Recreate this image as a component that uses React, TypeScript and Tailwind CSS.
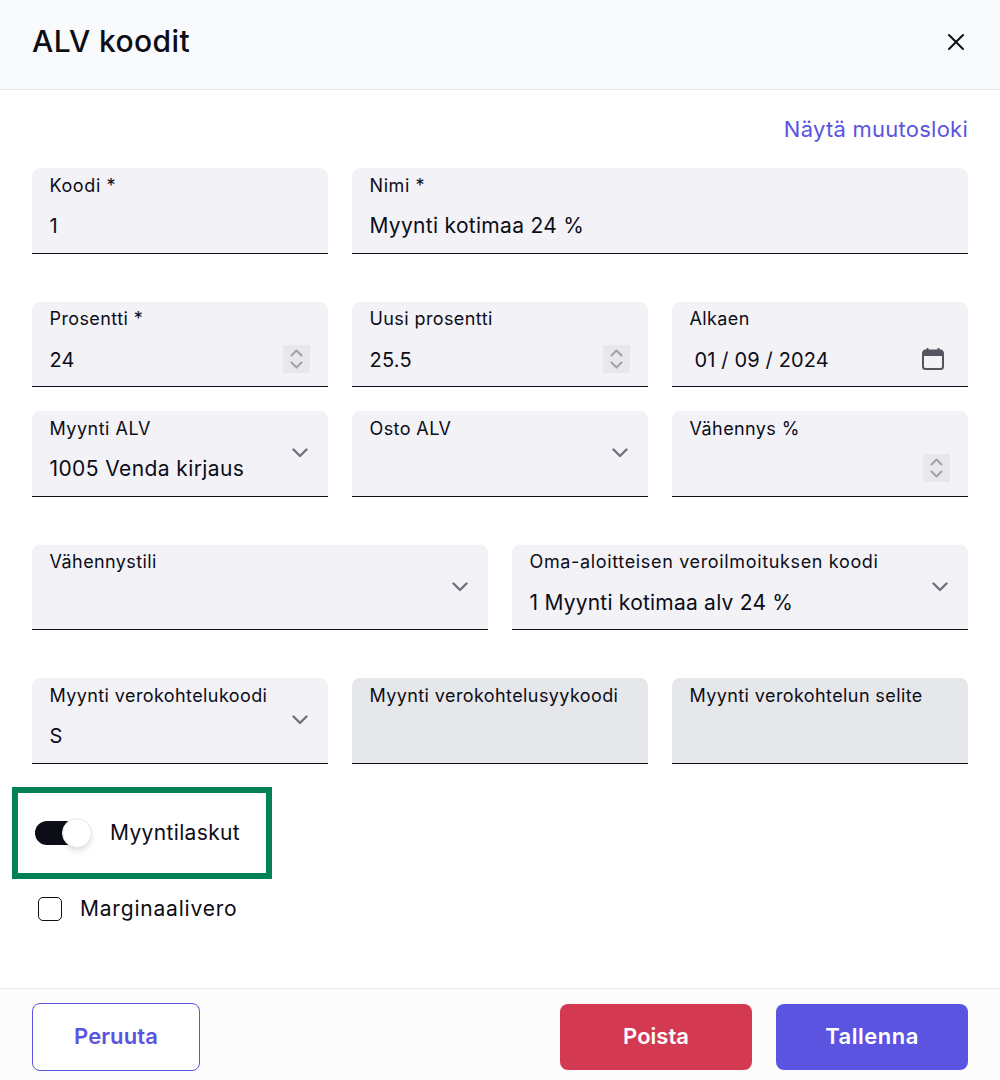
import React from "react";

const font = { fontFamily: "Inter, 'Noto Sans', sans-serif" };

function Select() {
  return (
    <svg width="16" height="10" viewBox="0 0 16 10" fill="none" className="absolute right-[20px] top-[37px]">
      <path d="M1.5 1.5 8 8l6.5-6.5" stroke="#71717f" strokeWidth="2.4" strokeLinecap="round" strokeLinejoin="round" />
    </svg>
  );
}

function Spin() {
  return (
    <div className="absolute right-[18px] top-[43px] w-[27px] h-[28px] bg-[#e7e7ec] flex flex-col items-center justify-center gap-[4px]">
      <svg width="13" height="8" viewBox="0 0 13 8" fill="none">
        <path d="M1.5 6.5 6.5 1.5l5 5" stroke="#a0a0ac" strokeWidth="2" strokeLinecap="round" strokeLinejoin="round" />
      </svg>
      <svg width="13" height="8" viewBox="0 0 13 8" fill="none">
        <path d="M1.5 1.5l5 5 5-5" stroke="#a0a0ac" strokeWidth="2" strokeLinecap="round" strokeLinejoin="round" />
      </svg>
    </div>
  );
}

function Calendar() {
  return (
    <svg width="22" height="22" viewBox="0 0 22 22" fill="none" className="absolute right-[24px] top-[46px]">
      <path d="M5.5 0.5v3M16.5 0.5v3" stroke="#55555f" strokeWidth="2" strokeLinecap="round" />
      <rect x="1" y="3" width="20" height="18" rx="2.5" stroke="#55555f" strokeWidth="2" />
      <path d="M1 3.5a2 2 0 0 1 2-2h16a2 2 0 0 1 2 2V8H1z" fill="#55555f" />
    </svg>
  );
}

type FieldProps = {
  label: string;
  value?: string;
  className: string;
  disabled?: boolean;
  adorn?: React.ReactNode;
  valueClass?: string;
  labelClass?: string;
};

function Field({ label, value, className, disabled, adorn, valueClass, labelClass }: FieldProps) {
  return (
    <div
      className={`relative h-[85.5px] rounded-t-[8px] border-b border-[#0d0d17] pl-[17.5px] pr-[18px] ${
        disabled ? "bg-[#e6e7eb]" : "bg-[#f2f2f7]"
      } ${className}`}
    >
      <div className={`pt-[5.5px] h-[36px] text-[18px] leading-[24px] text-[#0d0d17] whitespace-nowrap ${labelClass ?? "tracking-[0.4px]"}`}>{label}</div>
      {value ? (
        <div className={`leading-[30px] pt-[7px] text-[#0d0d17] whitespace-nowrap ${valueClass ?? "text-[21px] tracking-[0.3px]"}`}>{value}</div>
      ) : null}
      {adorn}
    </div>
  );
}

export default function App() {
  return (
    <div className="h-[1080px] w-[1000px] flex flex-col bg-white overflow-hidden" style={font}>
      <header className="h-[90px] shrink-0 flex items-center justify-between pl-[32px] pr-[35px] pb-[6px] bg-[#f9fafb] border-b border-[#e5e7eb]">
        <h1 className="text-[30px] leading-[36px] font-medium text-[#0d0d17] tracking-[0.4px] -mt-[2px]">ALV koodit</h1>
        <svg width="18" height="18" viewBox="0 0 18 18" fill="none">
          <path d="M2 2l14 14M16 2 2 16" stroke="#0d0d17" strokeWidth="2" strokeLinecap="round" />
        </svg>
      </header>

      <main className="flex-1 px-[32px] flex flex-col">
        <div className="h-[78px] flex justify-end pt-[24px]">
          <a className="text-[22px] leading-[30px] text-[#5b54e0] tracking-[0.25px]">Näytä muutosloki</a>
        </div>

        <div className="flex gap-[24px]">
          <Field className="w-[296px]" label="Koodi *" labelClass="tracking-[0.6px]" value="1" valueClass="text-[20px]" />
          <Field className="w-[616px]" label="Nimi *" labelClass="tracking-[0.6px]" value="Myynti kotimaa 24 %" />
        </div>

        <div className="flex gap-[24px] mt-[48px]">
          <Field className="w-[296px]" label="Prosentti *" value="24" valueClass="text-[20px]" adorn={<Spin />} />
          <Field className="w-[296px]" label="Uusi prosentti" value="25.5" valueClass="text-[20px] tracking-[0.2px]" adorn={<Spin />} />
          <Field className="w-[296px]" label="Alkaen" value="01 / 09 / 2024" valueClass="pl-[5px] text-[20px] tracking-[0.15px]" adorn={<Calendar />} />
        </div>

        <div className="flex gap-[24px] mt-[24px]">
          <Field className="w-[296px]" label="Myynti ALV" labelClass="tracking-[0.5px]" value="1005 Venda kirjaus" valueClass="text-[21px] tracking-[0.4px]" adorn={<Select />} />
          <Field className="w-[296px]" label="Osto ALV" adorn={<Select />} />
          <Field className="w-[296px]" label="Vähennys %" adorn={<Spin />} />
        </div>

        <div className="flex gap-[24px] mt-[48px]">
          <Field className="w-[456px]" label="Vähennystili" adorn={<Select />} />
          <Field className="w-[456px]" label="Oma-aloitteisen veroilmoituksen koodi" labelClass="tracking-[0.65px]" value="1 Myynti kotimaa alv 24 %" valueClass="text-[21px] tracking-[0.22px]" adorn={<Select />} />
        </div>

        <div className="flex gap-[24px] mt-[48px]">
          <Field className="w-[296px]" label="Myynti verokohtelukoodi" value="S" valueClass="text-[20px]" adorn={<Select />} />
          <Field className="w-[296px]" disabled label="Myynti verokohtelusyykoodi" />
          <Field className="w-[296px]" disabled label="Myynti verokohtelun selite" />
        </div>

        <div className="mt-[23.5px] -ml-[20px] w-[260px] h-[92px] border-[6px] border-[#008255] flex items-center pl-[17px]">
          <div className="relative w-[46px] h-[24px] rounded-full bg-[#0d0d17] shrink-0">
            <div className="absolute right-[-11px] top-[-3px] w-[30px] h-[30px] rounded-full bg-white border border-[#e5e7eb] shadow-md" />
          </div>
          <span className="ml-[29px] -mt-[1px] text-[21px] leading-[30px] text-[#0d0d17] tracking-[0.35px]">Myyntilaskut</span>
        </div>

        <div className="mt-[15px] ml-[6px] flex items-center gap-[18px] h-[30px]">
          <div className="w-[24px] h-[24px] rounded-[5px] border border-[#0d0d17] bg-white shrink-0" />
          <span className="text-[21px] leading-[30px] text-[#0d0d17] tracking-[0.8px]">Marginaalivero</span>
        </div>
      </main>

      <footer className="h-[92px] shrink-0 bg-[#fcfcfc] border-t border-[#e5e7eb] flex items-center justify-between px-[32px] pt-[4px]">
        <button className="w-[168px] h-[68px] rounded-[8px] border border-[#5b54e0] bg-white text-[#5b54e0] text-[22px] font-semibold tracking-[0.1px]">Peruuta</button>
        <div className="flex gap-[24px]">
          <button className="w-[192px] h-[66px] rounded-[8px] bg-[#d33a51] text-white text-[22px] font-semibold">Poista</button>
          <button className="w-[192px] h-[66px] rounded-[8px] bg-[#5b54e0] text-white text-[22px] font-semibold tracking-[0.5px]">Tallenna</button>
        </div>
      </footer>
    </div>
  );
}
